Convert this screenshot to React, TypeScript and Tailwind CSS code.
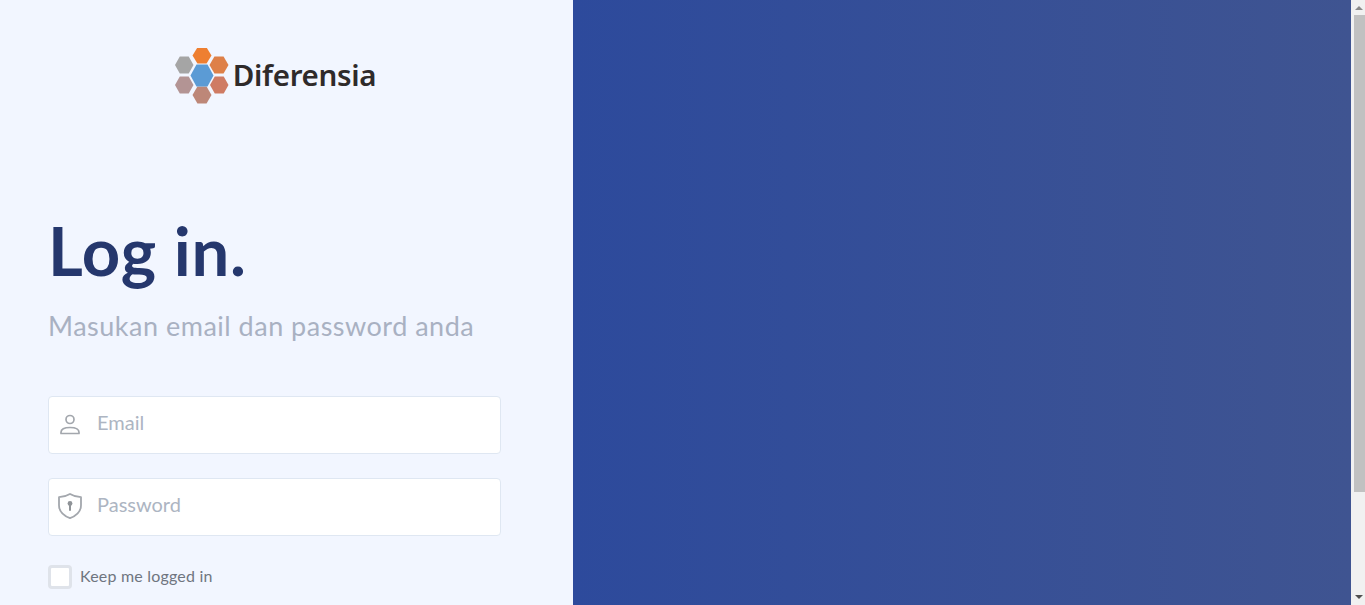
export default function App() {
  const hexes: [number, number, number, number, string][] = [
    [192.5, 47.5, 19, 16, "#ee7f31"],
    [175, 56.5, 18.5, 17, "#a5a5a5"],
    [209.5, 56.5, 19, 17, "#de8048"],
    [175, 76.5, 18.5, 17, "#b39494"],
    [210, 76.5, 18.5, 17, "#cf7b63"],
    [192.5, 86.5, 19, 17, "#bd8778"],
    [190.5, 64.5, 23, 22, "#5b9bd5"],
  ];
  return (
    <div className="flex h-[605px] w-[1365px] overflow-hidden font-['Lato',sans-serif]">
      <div className="flex w-[573px] shrink-0 flex-col bg-[#f2f6ff] pl-12 pr-[72px]">
        <div className="flex h-[104px] items-end justify-center pt-[48px]">
          <div className="ml-[2px] flex items-center">
            <svg width="58" height="56" viewBox="175 48 58 56" className="block">
              {hexes.map(([x, y, w, h, c], i) => {
                const d = w * 0.26;
                return (
                  <polygon
                    key={i}
                    fill={c}
                    points={`${x},${y + h / 2} ${x + d},${y} ${x + w - d},${y} ${x + w},${y + h / 2} ${x + w - d},${y + h} ${x + d},${y + h}`}
                  />
                );
              })}
            </svg>
            <span className="-translate-y-px font-['Noto_Sans',sans-serif] text-[29.5px] leading-[56px] font-semibold tracking-[-0.3px] text-[#2f2a2a]">
              Diferensia
            </span>
          </div>
        </div>
        <h1 className="mt-[108px] text-[67px] leading-[76px] font-bold tracking-[0.7px] text-[#25376d]">Log in.</h1>
        <p className="mt-[20px] text-[27px] leading-[36px] tracking-[0.5px] text-[#a9b1c2]">Masukan email dan password anda</p>
        <div className="mt-[52px] flex h-[58px] w-[453px] items-center rounded border border-[#dfe7f2] bg-white">
          <svg width="24" height="24" viewBox="0 0 24 24" fill="none" stroke="#a3a7ad" strokeWidth="1.7" className="ml-[9px] -translate-y-px">
            <circle cx="12" cy="7.5" r="4" />
            <path d="M3 21.5v-1.2c0-3 3-4.8 9-4.8s9 1.8 9 4.8v1.2z" strokeLinejoin="round" />
          </svg>
          <span className="ml-[15px] -translate-y-[3px] text-xl text-[#adb5c2]">Email</span>
        </div>
        <div className="mt-6 flex h-[58px] w-[453px] items-center rounded border border-[#dfe7f2] bg-white">
          <svg width="26" height="28" viewBox="0 0 26 28" fill="none" stroke="#a3a7ad" strokeWidth="1.8" className="ml-[8px] -translate-y-px">
            <path d="M13 2c3 1.800 7 3 11 3.200v8c0 6-4.500 10.500-11 13-6.500-2.500-11-7-11-13v-8C6 5 10 3.800 13 2z" strokeLinejoin="round" />
            <circle cx="13" cy="11.500" r="2.400" fill="#8f9398" stroke="none" />
            <rect x="12" y="12" width="2" height="7" rx="1" fill="#8f9398" stroke="none" />
          </svg>
          <span className="ml-[14px] -translate-y-[3px] text-xl text-[#adb5c2]">Password</span>
        </div>
        <div className="mt-[29px] flex items-center">
          <div className="h-6 w-6 rounded border-[3px] border-[#dfe3ea] bg-white" />
          <span className="ml-2 -translate-y-px text-base leading-6 tracking-[0.2px] text-[#6f7580]">Keep me logged in</span>
        </div>
      </div>
      <div className="flex-1 bg-gradient-to-r from-[#2d4a9c] to-[#3f5491]" />
      <div className="flex w-[14px] shrink-0 flex-col items-center bg-[#f1f1f1]">
        <svg width="8" height="15" viewBox="0 0 8 15" className="ml-[1px] shrink-0">
          <path d="M4 6 L8 10 H0 Z" fill="#8a8a8a" />
        </svg>
        <div className="ml-[2px] h-[477px] w-[11px] bg-[#c1c1c1]" />
        <div className="flex-1" />
        <svg width="8" height="15" viewBox="0 0 8 15" className="ml-[1px] shrink-0">
          <path d="M0 5 H8 L4 9 Z" fill="#505050" />
        </svg>
      </div>
    </div>
  );
}
